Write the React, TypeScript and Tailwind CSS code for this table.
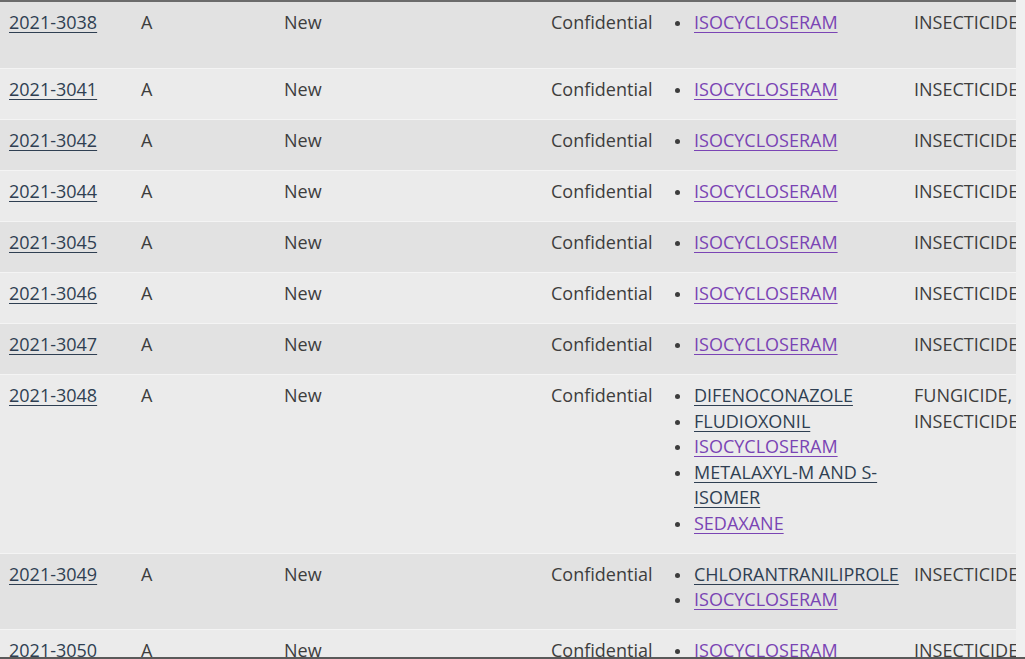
type Ingredient = { name: string; visited?: boolean };

interface Row {
  id: string;
  ingredients: Ingredient[];
  use: string;
  tall?: boolean;
}

const iso: Ingredient = { name: "ISOCYCLOSERAM", visited: true };

const rows: Row[] = [
  { id: "2021-3038", ingredients: [iso], use: "INSECTICIDE", tall: true },
  { id: "2021-3041", ingredients: [iso], use: "INSECTICIDE" },
  { id: "2021-3042", ingredients: [iso], use: "INSECTICIDE" },
  { id: "2021-3044", ingredients: [iso], use: "INSECTICIDE" },
  { id: "2021-3045", ingredients: [iso], use: "INSECTICIDE" },
  { id: "2021-3046", ingredients: [iso], use: "INSECTICIDE" },
  { id: "2021-3047", ingredients: [iso], use: "INSECTICIDE" },
  {
    id: "2021-3048",
    ingredients: [
      { name: "DIFENOCONAZOLE" },
      { name: "FLUDIOXONIL" },
      iso,
      { name: "METALAXYL-M AND S-ISOMER" },
      { name: "SEDAXANE", visited: true },
    ],
    use: "FUNGICIDE, INSECTICIDE",
  },
  {
    id: "2021-3049",
    ingredients: [{ name: "CHLORANTRANILIPROLE" }, iso],
    use: "INSECTICIDE",
  },
  { id: "2021-3050", ingredients: [iso], use: "INSECTICIDE" },
];

function IngredientList({ items }: { items: Ingredient[] }) {
  return (
    <ul>
      {items.map((item) => (
        <li key={item.name} className="flex items-start">
          <span className="mt-[11px] mr-[14px] h-[5px] w-[5px] shrink-0 rounded-full bg-[#3d3d3d]" />
          <a
            href="#"
            className={`underline decoration-1 underline-offset-[3px] ${
              item.visited ? "text-[#7a44b4]" : "text-[#2f3f52]"
            }`}
          >
            {item.name}
          </a>
        </li>
      ))}
    </ul>
  );
}

export default function App() {
  return (
    <div
      className="flex h-[659px] w-[1025px] flex-col overflow-hidden bg-[#f0f0f0] text-[18px] leading-[25.6px] text-[#3d3d3d]"
      style={{ fontFamily: '"Open Sans", "Noto Sans", sans-serif' }}
    >
      <div className="min-h-0 flex-1 w-[1016px] overflow-hidden border-t-2 border-[#6b6b6b]">
        <div className="w-[1200px]">
          {rows.map((row, i) => (
            <div
              key={row.id}
              className={`grid grid-cols-[132px_143px_267px_124px_239px_140px_1fr] border-b border-[#f4f4f4] pt-[8px] pb-[16.4px] ${
                row.tall ? "min-h-[67px]" : ""
              } ${i % 2 === 0 ? "bg-[#e2e2e2]" : "bg-[#ebebeb]"}`}
            >
              <div className="pl-[9px]">
                <a
                  href="#"
                  className="text-[#2f3f52] underline decoration-1 underline-offset-[3px]"
                >
                  {row.id}
                </a>
              </div>
              <div className="pl-[9px]">A</div>
              <div className="pl-[9px]">New</div>
              <div className="pl-[9px]">Confidential</div>
              <div className="pl-[9px] pr-[3px]">
                <IngredientList items={row.ingredients} />
              </div>
              <div className="pl-[9px] pr-[8px]">{row.use}</div>
              <div />
            </div>
          ))}
        </div>
      </div>
      <div className="h-[2px] w-full shrink-0 bg-[#5a5a5a]" />
    </div>
  );
}
